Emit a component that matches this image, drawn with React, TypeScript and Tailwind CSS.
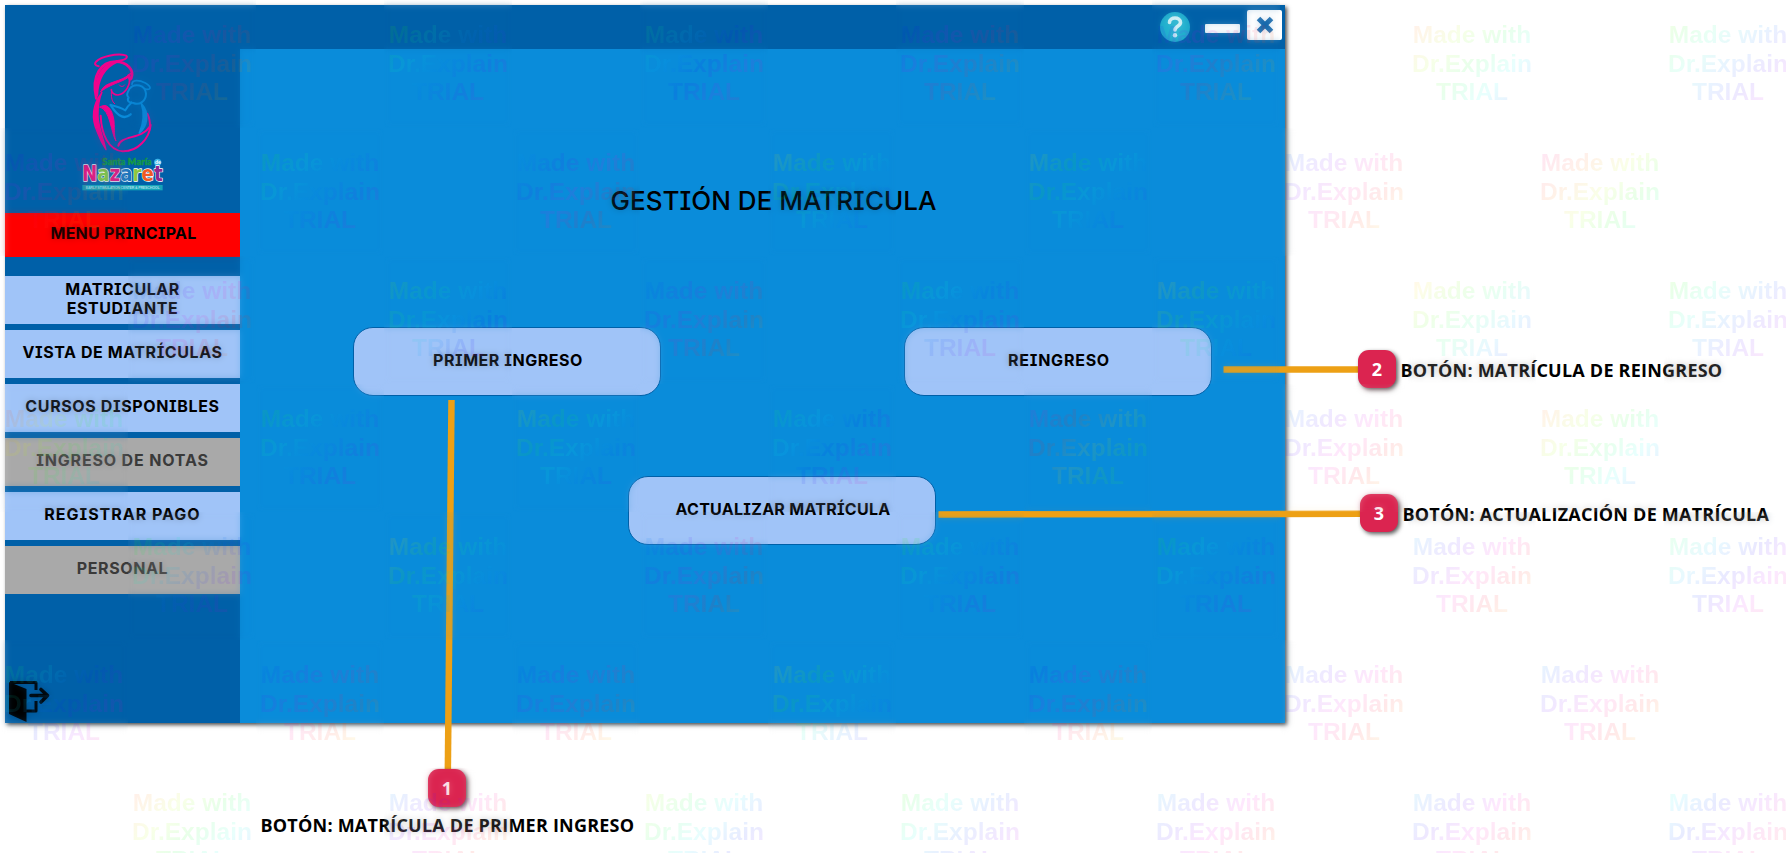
const TILE = 128;

/* Starting hue of every watermark tile, row by row. Even rows begin on the second column. */
const WATERMARK_HUES: number[][] = [
  [210, 90, 120, 210, 220, 5, 85],
  [220, 90, 180, 40, 45, 195, 310],
  [180, 70, 195, 100, 30, 25, 90],
  [350, 90, 50, 110, 290, 185, 5],
  [95, 35, 190, 90, 95, 185, 120],
  [110, 200, 200, 40, 210, 185, 190],
  [0, 190, 60, 95, 180, 180, 155],
];

function hueGradient(start: number) {
  const stops = [0, 1, 2, 3, 4, 5, 6].map((n) => `hsla(${(start - 20 + n * 48) % 360}, 100%, 50%, 0.09)`);
  return `linear-gradient(135deg, ${stops.join(', ')})`;
}

function Watermark() {
  return (
    <div className="pointer-events-none absolute inset-0 overflow-hidden">
      {WATERMARK_HUES.flatMap((row, r) =>
        row.map((hue, c) => (
          <div
            key={`${r}-${c}`}
            className="absolute h-[128px] w-[128px]"
            style={{ left: (c * 2 + (r % 2 === 0 ? 1 : 0)) * TILE, top: r * TILE }}
          >
            <div className="absolute inset-0 opacity-[0.22] backdrop-blur-[3px]" />
            <div
              className="absolute inset-0 bg-clip-text pt-[21px] text-center font-['Liberation_Sans',sans-serif] text-[24.5px] leading-[28.6px] font-bold whitespace-nowrap text-transparent"
              style={{ backgroundImage: hueGradient(hue) }}
            >
              <div>Made with</div>
              <div>Dr.Explain</div>
              <div>TRIAL</div>
            </div>
          </div>
        )),
      )}
    </div>
  );
}

function Logo() {
  return (
    <svg viewBox="0 0 300 450" className="ml-[65px] h-[150px] w-[100px] shrink-0" fill="none" strokeLinecap="round" strokeLinejoin="round">
      <g stroke="#f0038c">
        <path d="M86 64C62 60 80 40 118 32C146 26 176 28 170 38C166 46 152 46 140 48" strokeWidth="6" />
        <path d="M79 160C62 90 96 50 136 50C172 50 194 76 184 100C180 106 178 100 176 92" strokeWidth="8" />
        <path d="M82 152C70 98 98 56 140 52C104 68 84 98 82 152Z" fill="#f0038c" strokeWidth="5" />
        <path d="M92 140C104 106 156 114 182 84C180 108 130 110 92 140Z" fill="#f0038c" strokeWidth="3" />
        <path d="M178 98C182 118 168 146 144 150C132 150 124 142 124 134" strokeWidth="5" />
        <path d="M148 120C152 126 160 126 164 120" strokeWidth="3" />
        <path d="M96 142C66 180 64 222 82 262C90 284 100 302 108 314C100 280 84 240 84 212C84 184 86 164 96 142Z" fill="#f0038c" strokeWidth="4" />
        <path d="M124 142C124 160 126 170 134 176" strokeWidth="3" />
        <path d="M90 186C112 170 128 196 132 228C134 256 132 274 138 288C122 262 122 196 90 186Z" fill="#f0038c" strokeWidth="3" />
        <path d="M92 212C94 268 116 316 158 319C204 320 238 280 242 240" strokeWidth="6" />
        <path d="M145 302C152 270 216 284 240 244C240 216 232 208 232 206" strokeWidth="6" />
      </g>
      <g stroke="#0a8bda">
        <path d="M186 118C186 104 206 104 226 114C246 126 244 136 226 132" strokeWidth="5" />
        <path d="M178 132C194 112 226 120 228 146C228 168 208 182 190 174C176 174 170 166 176 158C168 150 172 144 178 132" strokeWidth="6" />
        <path d="M122 180C146 186 156 190 166 196C178 174 182 180 184 172" strokeWidth="6" />
        <path d="M122 180C146 220 166 222 182 208" strokeWidth="7" />
        <path d="M214 176C240 204 232 244 208 264C220 236 226 210 214 176Z" fill="#0a8bda" strokeWidth="5" />
      </g>
      <circle cx="263" cy="352" r="11" fill="#39b4e8" />
      <text x="97" y="361" fill="#159a44" stroke="#159a44" strokeWidth="1.500" fontFamily="Lato, sans-serif" fontWeight="700" fontSize="27" textLength="148">Santa María</text>
      <text x="255" y="358" fill="#fff" fontFamily="Lato, sans-serif" fontWeight="700" fontSize="16">de</text>
      <text x="36" y="407" textLength="242" lengthAdjust="spacingAndGlyphs" fontFamily="'DejaVu Sans', sans-serif" fontWeight="700" fontSize="66" stroke="#fff" strokeWidth="4" paintOrder="stroke">
        <tspan fill="#e3127e">N</tspan>
        <tspan fill="#7cc243">a</tspan>
        <tspan fill="#e3127e">z</tspan>
        <tspan fill="#1c75bc">a</tspan>
        <tspan fill="#8dc63f">r</tspan>
        <tspan fill="#f15a24">e</tspan>
        <tspan fill="#92278f">t</tspan>
      </text>
      <rect x="37" y="420" width="241" height="16" fill="#14a3b8" />
      <text x="47" y="432" fill="#a5dfe8" fontFamily="'Liberation Sans', sans-serif" fontSize="11" textLength="222">EARLY STIMULATION CENTER &amp; PRESCHOOL</text>
    </svg>
  );
}

function ExitIcon() {
  return (
    <svg viewBox="0 0 42 42" className="h-[42px] w-[42px]" fill="none" stroke="#000">
      <path d="M0 1L17.500 8V41L0 33Z" fill="#000" stroke="none" />
      <path d="M1 1.500H27V9M27 20V30H17" strokeWidth="3" strokeLinejoin="round" />
      <path d="M22 14.500H38M32 8.500L38.500 14.500L32 21" strokeWidth="3.600" strokeLinecap="round" strokeLinejoin="round" />
    </svg>
  );
}

function TopBar() {
  return (
    <header className="flex h-[44px] items-start justify-end bg-[#0060a8] pr-[3px]">
      <svg viewBox="0 0 30 30" className="mt-[7px] h-[30px] w-[30px]">
        <circle cx="15" cy="15" r="15" fill="#22b1cf" />
        <path d="M9.500 10.500C9.500 4.500 20.500 4.500 20.500 10.500C20.500 14.500 15 14 15 18" fill="none" stroke="#e4f7fa" strokeWidth="3.600" strokeLinecap="round" />
        <circle cx="15" cy="23.300" r="2.200" fill="#e4f7fa" />
      </svg>
      <div className="mt-[19px] ml-[15px] h-[9px] w-[35px] rounded-[1px] bg-white" />
      <div className="mt-[5px] ml-[7px] flex h-[30px] w-[35px] items-center justify-center rounded-[2px] bg-white">
        <svg viewBox="0 0 18 18" className="h-[18px] w-[18px]">
          <path d="M2.500 2.500L15.500 15.500M15.500 2.500L2.500 15.500" stroke="#0c62a8" strokeWidth="5" />
        </svg>
      </div>
    </header>
  );
}

const NAV = [
  { label: 'MATRICULAR ESTUDIANTE', tone: 'bg-[#a0c4f8] text-black', track: 'px-[50px] tracking-[0.5px]' },
  { label: 'VISTA DE MATRÍCULAS', tone: 'bg-[#a0c4f8] text-black', track: 'tracking-[0.57px]' },
  { label: 'CURSOS DISPONIBLES', tone: 'bg-[#a0c4f8] text-black', track: 'tracking-[0.62px]' },
  { label: 'INGRESO DE NOTAS', tone: 'bg-[#a9a9a9] text-[#3a3a3a]', track: 'tracking-[0.84px]' },
  { label: 'REGISTRAR PAGO', tone: 'bg-[#a0c4f8] text-black', track: 'tracking-[1px]' },
  { label: 'PERSONAL', tone: 'bg-[#a9a9a9] text-[#3a3a3a]', track: 'tracking-[0.6px]' },
];

function Sidebar() {
  return (
    <aside className="flex w-[235px] shrink-0 flex-col bg-[#0060a8] pt-[40px]">
      <Logo />
      <div className="mt-[18px] flex h-[44px] shrink-0 items-center justify-center bg-[#ff0000] pb-[4px] pl-[2px] tracking-[0.25px]">
        MENU PRINCIPAL
      </div>
      <nav className="mt-[19px] flex flex-col gap-[6px]">
        {NAV.map((item) => (
          <button
            key={item.label}
            className={`flex h-[48px] items-center justify-center pb-[3px] text-center leading-[19px] ${item.tone} ${item.track}`}
          >
            {item.label}
          </button>
        ))}
      </nav>
      <div className="mt-auto pl-[4px]">
        <ExitIcon />
      </div>
    </aside>
  );
}

function ActionButton({ label, track }: { label: string; track: string }) {
  return (
    <button
      className={`flex h-[69px] w-[308px] items-center justify-center rounded-[20px] border-[1.5px] border-[#0060a8] bg-[#a0c4f8] pb-[3px] pl-[3px] ${track}`}
    >
      {label}
    </button>
  );
}

const NOTES = [
  { n: 1, text: 'BOTÓN: MATRÍCULA DE PRIMER INGRESO', badge: 'left-[428px] top-[769px]', caption: 'left-[260.5px] top-[813px]' },
  { n: 2, text: 'BOTÓN: MATRÍCULA DE REINGRESO', badge: 'left-[1358px] top-[350px]', caption: 'left-[1400.5px] top-[358px]' },
  { n: 3, text: 'BOTÓN: ACTUALIZACIÓN DE MATRÍCULA', badge: 'left-[1360px] top-[494px]', caption: 'left-[1402.5px] top-[502px]' },
];

function Callouts() {
  return (
    <div className="absolute inset-0">
      <svg viewBox="0 0 1786 853" className="absolute inset-0 h-full w-full" stroke="#eda015" strokeWidth="6.500">
        <path d="M451.500 400L447.800 775" />
        <path d="M1223.500 369.500H1365" />
        <path d="M938.500 514.500L1365 513.800" />
      </svg>
      {NOTES.map((note) => (
        <div key={note.n}>
          <div
            className={`absolute flex h-[38px] w-[38px] items-center justify-center rounded-[11px] bg-[#db2450] font-['Open_Sans',sans-serif] text-[18px] font-bold text-white shadow-[2px_2px_4px_rgba(0,0,0,0.65)] ${note.badge}`}
          >
            {note.n}
          </div>
          <div
            className={`absolute font-['Open_Sans',sans-serif] text-[18px] leading-[24px] font-bold tracking-[0.22px] whitespace-nowrap text-black ${note.caption}`}
          >
            {note.text}
          </div>
        </div>
      ))}
    </div>
  );
}

export default function App() {
  return (
    <div className="relative h-[853px] w-[1786px] overflow-hidden bg-white pt-[5px] pl-[5px]">
      <div className="flex h-[718px] w-[1280px] font-['Inter',sans-serif] text-[16px] leading-[20px] font-bold text-black shadow-[2px_2px_4px_rgba(0,0,0,0.7)] [font-feature-settings:'cv08']">
        <Sidebar />
        <div className="flex flex-1 flex-col bg-[#0a8cda]">
          <TopBar />
          <main>
            <h1 className="mt-[136px] pl-[22px] text-center text-[26px] leading-[32px] font-medium tracking-[0.02px]">
              GESTIÓN DE MATRICULA
            </h1>
            <div className="mt-[110px] flex gap-[243px] pl-[112.5px]">
              <ActionButton label="PRIMER INGRESO" track="tracking-[0.55px]" />
              <ActionButton label="REINGRESO" track="tracking-[0.76px]" />
            </div>
            <div className="mt-[80px] pl-[387.5px]">
              <ActionButton label="ACTUALIZAR MATRÍCULA" track="tracking-[0.28px]" />
            </div>
          </main>
        </div>
      </div>
      <Callouts />
      <Watermark />
    </div>
  );
}
